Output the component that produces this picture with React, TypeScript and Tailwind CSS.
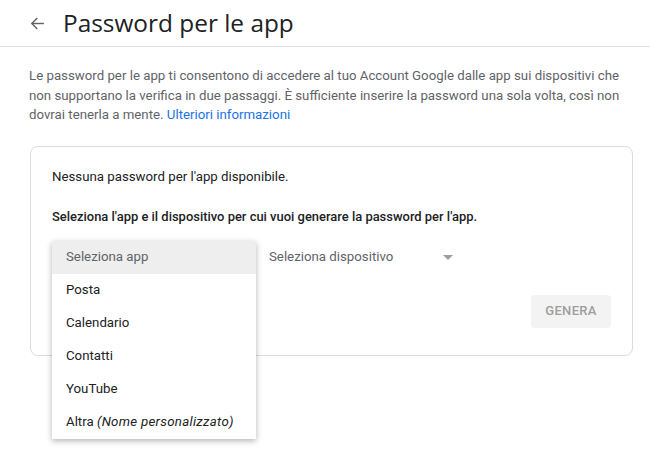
import React from "react";

export default function App() {
  const items = ["Posta", "Calendario", "Contatti", "YouTube"];
  return (
    <div className="w-[650px] h-[451px] bg-white overflow-hidden relative" style={{ fontFamily: "Roboto, 'Liberation Sans', sans-serif" }}>
      <div className="h-[47px] border-b border-[#e0e0e0] flex items-center">
        <svg className="ml-[29px] mt-[1px]" width="17" height="17" viewBox="0 0 24 24" fill="none" stroke="#5f6368" strokeWidth="2" strokeLinecap="square">
          <path d="M20 12H5" />
          <path d="M11 5l-7 7 7 7" />
        </svg>
        <h1 className="ml-[17px] text-[24.4px] text-[#202124] leading-none" style={{ fontFamily: "'Open Sans', Roboto, sans-serif" }}>Password per le app</h1>
      </div>
      <p className="px-[29px] pt-[19px] pr-[20px] text-[13.25px] leading-[19.5px] text-[#5f6368]">
        Le password per le app ti consentono di accedere al tuo Account Google dalle app sui dispositivi che non supportano la verifica in due passaggi. È sufficiente inserire la password una sola volta, così non dovrai tenerla a mente. <span className="text-[#1a73e8]">Ulteriori informazioni</span>
      </p>
      <div className="relative ml-[30px] mt-[21px] w-[603px] h-[210px] border border-[#dadce0] rounded-[8px] px-[21px] pt-[20px]">
        <p className="text-[13.25px] leading-[20px] text-[#202124]">Nessuna password per l'app disponibile.</p>
        <p className="mt-[20px] text-[12.95px] leading-[20px] text-[#202124] font-medium">Seleziona l'app e il dispositivo per cui vuoi generare la password per l'app.</p>
        <div className="mt-[14px] h-[33px] flex items-center">
          <div className="w-[204px]" />
          <div className="ml-[13px] w-[190px] flex items-center justify-between text-[13.25px] text-[#5f6368]">
            <span>Seleziona dispositivo</span>
            <svg width="10" height="5" viewBox="0 0 10 5" className="mr-[6px]">
              <path d="M0 0h10L5 5z" fill="#9e9e9e" />
            </svg>
          </div>
        </div>
        <div className="mt-[21px] flex justify-end">
          <div className="w-[80px] h-[33px] bg-[#f3f3f3] rounded-[4px] flex items-center justify-center text-[13px] font-medium tracking-[0.3px] text-[#9e9e9e]">GENERA</div>
        </div>
        <div className="absolute left-[21px] top-[94px] w-[204px] bg-white shadow-[0_2px_6px_rgba(0,0,0,0.3)] z-10">
          <div className="h-[33px] bg-[#eeeeee] flex items-center pl-[14px] text-[13.25px] text-[#5f6368]">Seleziona app</div>
          {items.map((t) => (
            <div key={t} className="h-[33px] flex items-center pl-[14px] text-[13.25px] text-[#202124]">{t}</div>
          ))}
          <div className="h-[33px] flex items-center pl-[14px] text-[13.25px] text-[#202124]">
            Altra&nbsp;<i className="tracking-[0.3px]">(Nome personalizzato)</i>
          </div>
        </div>
      </div>
    </div>
  );
}
